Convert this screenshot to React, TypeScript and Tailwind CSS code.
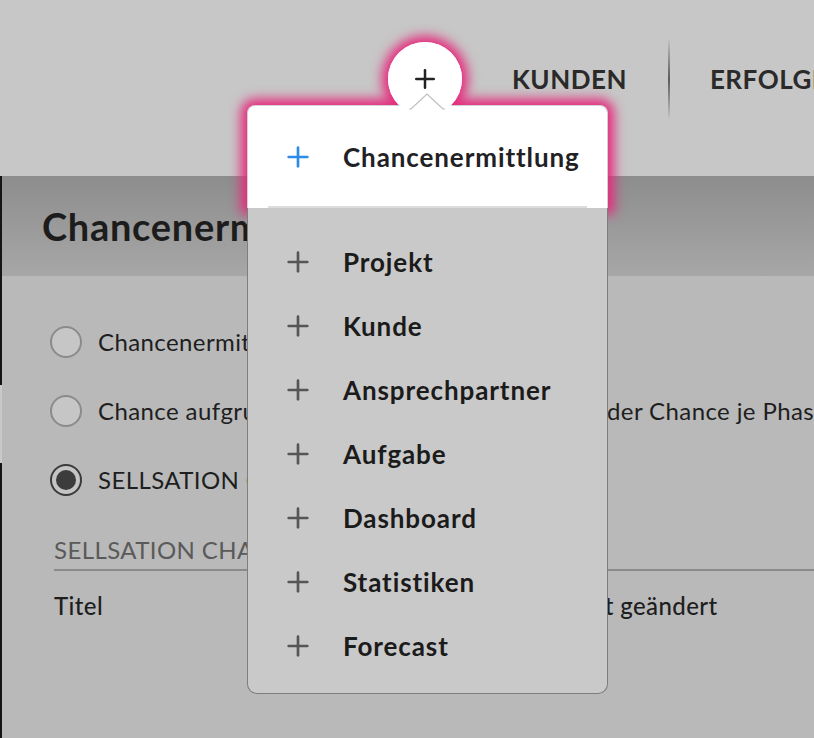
import { Plus } from "lucide-react";

const menuItems = ["Projekt", "Kunde", "Ansprechpartner", "Aufgabe", "Dashboard", "Statistiken", "Forecast"];

function Radio({ checked }: { checked?: boolean }) {
  return checked ? (
    <span className="flex h-[32px] w-[32px] shrink-0 items-center justify-center rounded-full border-2 border-[#3a3a3a] bg-[#c4c4c4]">
      <span className="h-[20px] w-[20px] rounded-full bg-[#3c3c3c]" />
    </span>
  ) : (
    <span className="h-[32px] w-[32px] shrink-0 rounded-full border-2 border-[#8b8b8b] bg-[#c6c6c6]" />
  );
}

function AddMenu() {
  return (
    <div className="absolute left-[247px] top-[105px] z-10 w-[361px]">
      <div className="flex h-[103px] flex-col rounded-t-[8px] border border-b-0 border-[#d2d2d2] bg-white shadow-[0_0_12px_6px_#e6287c]">
        <div className="flex flex-1 items-center pt-[2px]">
          <Plus className="ml-[34px] h-[32px] w-[32px] text-[#2b8be6]" strokeWidth={2} absoluteStrokeWidth />
          <span className="ml-[29px] text-[26px] font-bold tracking-[0.9px] text-[#1f2124]">Chancenermittlung</span>
        </div>
        <div className="mx-[20px] h-[2px] bg-[#dcdcdc]" />
      </div>
      <ul className="rounded-b-[10px] border border-t-0 border-[#7e7e7e] bg-[#c9c9c9] pt-[22px] pb-[15px]">
        {menuItems.map((item) => (
          <li key={item} className="flex h-[64px] items-center">
            <Plus className="ml-[34px] h-[32px] w-[32px] text-[#555555]" strokeWidth={2} absoluteStrokeWidth />
            <span className="ml-[29px] text-[26px] font-bold tracking-[0.9px] text-[#1b1b1b]">{item}</span>
          </li>
        ))}
      </ul>
    </div>
  );
}

export default function App() {
  return (
    <div className="relative h-[738px] w-[814px] overflow-hidden bg-[#b9b9b9] font-['Lato',sans-serif]">
      <header className="flex h-[176px] items-start bg-[#c7c7c7]">
        <nav className="ml-[388px] mt-[38px] flex items-center">
          <div className="relative h-[74px] w-[74px]">
            <div className="absolute inset-0 rounded-full bg-white shadow-[0_0_12px_6px_#e6287c]" />
            <div className="absolute inset-0 z-20 flex items-center justify-center rounded-full bg-white">
              <Plus className="h-[30px] w-[30px] text-[#222222]" strokeWidth={2} absoluteStrokeWidth />
            </div>
            <svg className="absolute left-[21px] top-[51px] z-30" width="36" height="18" viewBox="0 0 36 18">
              <path d="M0 16 H2 L18 1 L34 16 H36" fill="white" stroke="#bdbdbd" strokeWidth="1.2" />
            </svg>
          </div>
          <span className="ml-[50px] text-[26px] font-bold tracking-[0.5px] text-[#2a2a2a]">KUNDEN</span>
          <span className="ml-[41px] h-[82px] w-[2px] bg-gradient-to-b from-[#c7c7c7] via-[#5c5c5c] to-[#c7c7c7]" />
          <span className="ml-[40px] whitespace-nowrap text-[26px] font-bold tracking-[0.5px] text-[#2a2a2a]">ERFOLGE</span>
        </nav>
      </header>

      <div className="flex h-[562px]">
        <div className="flex w-[2px] shrink-0 flex-col">
          <div className="h-[209px] bg-[#151515]" />
          <div className="h-[78px] bg-[#c9c9c9]" />
          <div className="flex-1 bg-[#151515]" />
        </div>
        <main className="min-w-0 flex-1">
          <div className="flex h-[100px] items-center bg-gradient-to-b from-[#8d8d8d] to-[#a7a7a7] pl-[40px]">
            <h1 className="whitespace-nowrap text-[38px] font-bold tracking-[0.7px] text-[#1c1c1c]">Chancenermittlung</h1>
          </div>
          <div className="pl-[48px] pt-[48px] text-[24px] leading-[36px] tracking-[0.4px] text-[#1e1e1e]">
            <div className="flex flex-col gap-[33px]">
              <label className="flex items-center gap-[16px]">
                <Radio />
                <span className="whitespace-nowrap">Chancenermittlung aus Projekten</span>
              </label>
              <label className="flex items-center gap-[16px]">
                <Radio />
                <span className="flex whitespace-nowrap">
                  <span className="inline-block w-[509px] overflow-hidden">Chance aufgrund Wahrscheinlichkeit</span>
                  <span>der Chance je Phase</span>
                </span>
              </label>
              <label className="flex items-center gap-[16px]">
                <Radio checked />
                <span className="whitespace-nowrap">SELLSATION CHANCENERMITTLUNG</span>
              </label>
            </div>
            <div className="ml-[4px] mt-[38px] border-b-2 border-[#8a8a8a] pb-[5px] text-[24px] leading-[28px] text-[#5a5a5a]">
              SELLSATION CHANCEN
            </div>
            <div className="ml-[4px] mt-[21px] grid grid-cols-[483px_1fr] leading-[28px] font-medium">
              <span>Titel</span>
              <span className="whitespace-nowrap">Zuletzt geändert</span>
            </div>
          </div>
        </main>
      </div>

      <AddMenu />
    </div>
  );
}
